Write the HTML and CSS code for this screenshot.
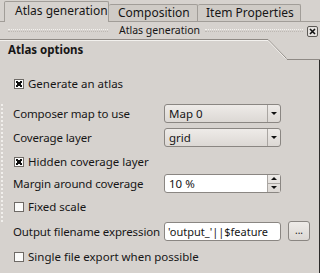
FILE: index.html
```html
<!DOCTYPE html>
<html lang="en">
<head>
    <meta charset="UTF-8">
    <title>Atlas generation</title>
    <link rel="stylesheet" href="styles.css">
</head>
<body>
    <div class="tabbar">
        <div class="tab active">Atlas generation</div>
        <div class="tab">Composition</div>
        <div class="tab">Item Properties</div>
    </div>

    <div class="dock-title">
        <span class="grip grip-left"></span>
        <span class="dock-name">Atlas generation</span>
        <span class="grip grip-right"></span>
        <span class="dock-close">
            <svg width="11" height="11" viewBox="0 0 11 11">
                <rect x="0.5" y="0.5" width="10" height="10" rx="1.5" fill="#e4e1de" stroke="#5c5955"/>
                <path d="M3 3 L8 8 M8 3 L3 8" stroke="#111" stroke-width="1.6"/>
            </svg>
        </span>
    </div>

    <div class="group-head">
        <div class="group-title">Atlas options</div>
        <svg class="group-slant" width="19" height="21" viewBox="0 0 19 21">
            <path d="M0 0.5 L18.5 19.5" stroke="#8f8a85" stroke-width="1" fill="none"/>
            <path d="M0 1.5 L17.5 19.5" stroke="#f3f1ee" stroke-width="1" fill="none"/>
        </svg>
        <div class="group-tail"></div>
    </div>

    <div class="group-body">
        <label class="check-row first">
            <span class="box checked"></span>Generate an atlas
        </label>

        <div class="form-rows">
            <div class="form-grid">
                <div class="row r1">
                    <span class="label">Composer map to use</span>
                    <span class="combo">Map 0<span class="combo-arrow"></span></span>
                </div>
                <div class="row r2">
                    <span class="label">Coverage layer</span>
                    <span class="combo">grid<span class="combo-arrow"></span></span>
                </div>
                <div class="row r3">
                    <label class="check"><span class="box checked"></span>Hidden coverage layer</label>
                </div>
                <div class="row r4">
                    <span class="label">Margin around coverage</span>
                    <span class="spin">10 %<span class="spin-arrows"><i class="up"></i><i class="down"></i></span></span>
                </div>
                <div class="row r5">
                    <label class="check"><span class="box"></span>Fixed scale</label>
                </div>
            </div>
            <div class="row r6">
                <span class="label">Output filename expression</span>
                <span class="field">'output_'||$feature</span>
                <span class="dots-btn">...</span>
            </div>
            <div class="row r7">
                <label class="check"><span class="box"></span>Single file export when possible</label>
            </div>
        </div>
    </div>
</body>
</html>
```

FILE: styles.css
```css
body {
    margin: 0;
    width: 320px;
    height: 273px;
    overflow: hidden;
    background: #d6d2ce;
    font-family: "Noto Sans", sans-serif;
    font-size: 11.5px;
    color: #161616;
    white-space: nowrap;
}

/* tabs */
.tabbar {
    display: flex;
    align-items: flex-end;
    height: 22px;
    padding-left: 4px;
    box-sizing: border-box;
    border-bottom: 1px solid #a19d98;
}

.tab {
    height: 17px;
    padding: 0 8px;
    box-sizing: border-box;
    border: 1px solid #a19d98;
    border-bottom: none;
    border-left: none;
    background: #cfcbc6;
    font-size: 12px;
    line-height: 16px;
    border-radius: 2px 2px 0 0;
}

.tab:nth-child(2) {
    width: 89px;
    padding-left: 9px;
}

.tab:nth-child(3) {
    width: 103px;
}

.tab.active {
    width: 105px;
    height: 21px;
    margin-bottom: -1px;
    padding-left: 10px;
    border-left: 1px solid #a19d98;
    background: #d6d2ce;
    line-height: 18px;
}

/* dock title */
.dock-title {
    display: flex;
    align-items: center;
    height: 16px;
    font-size: 10.5px;
}

.grip {
    height: 1px;
    border-top: 1px dotted #f4f2ef;
    border-bottom: 1px dotted #bdb8b3;
}

.grip-left {
    margin-left: 8px;
    width: 100px;
}

.dock-name {
    margin-left: 11px;
    width: 86px;
}

.grip-right {
    width: 98px;
}

.dock-close {
    display: flex;
    margin-left: 4px;
    margin-top: 3px;
}

/* group header */
.group-head {
    display: flex;
    height: 21px;
    margin-top: 1px;
}

.group-title {
    width: 268px;
    padding-left: 8px;
    box-sizing: border-box;
    border-top: 1px solid #8f8a85;
    box-shadow: inset 0 1px 0 #f3f1ee;
    font-weight: bold;
    font-size: 11.5px;
    line-height: 16px;
    padding-top: 2px;
}

.group-tail {
    flex: 1;
    border-bottom: 1px solid #8f8a85;
}

/* group body */
.group-body {
    height: 214px;
    border-right: 1px solid #2c2b2a;
    padding-top: 14px;
    box-sizing: border-box;
}

.check-row,
.check {
    display: flex;
    align-items: center;
    height: 19px;
    padding-left: 14px;
}

.box {
    width: 8px;
    height: 8px;
    margin-right: 4px;
    border: 1px solid #6e6a66;
    background: #fbfbfa;
    position: relative;
}

.box.checked::after {
    content: "";
    position: absolute;
    left: 1px;
    top: 1px;
    width: 6px;
    height: 6px;
    background:
        linear-gradient(45deg, transparent 36%, #111 36%, #111 64%, transparent 64%),
        linear-gradient(-45deg, transparent 36%, #111 36%, #111 64%, transparent 64%);
}

.form-rows {
    margin-top: 11px;
}

.form-grid {
    border-left: 2px dotted #f1efec;
    margin-left: 1px;
    margin-right: -3px;
}

.form-grid .row {
    margin-left: -3px;
}

.row {
    display: flex;
    align-items: flex-start;
}

.row .label {
    width: 151px;
    padding-left: 13px;
    line-height: 19px;
    letter-spacing: -0.12px;
}

.r1, .r2 { height: 24px; }
.r3 { height: 22px; }
.r4 { height: 23px; }
.r5, .r6 { height: 25px; }
.r7 { height: 19px; }

.combo,
.spin,
.field {
    position: relative;
    width: 117px;
    height: 19px;
    box-sizing: border-box;
    padding-left: 4px;
    border: 1px solid #8a8682;
    border-radius: 3px;
    line-height: 17px;
}

.combo {
    background: linear-gradient(#eeebe8, #dcd8d4);
}

.combo-arrow {
    position: absolute;
    right: 0;
    top: 0;
    width: 12px;
    height: 17px;
    border-left: 1px solid #aaa6a2;
}

.combo-arrow::after {
    content: "";
    position: absolute;
    left: 3px;
    top: 7px;
    border-left: 3px solid transparent;
    border-right: 3px solid transparent;
    border-top: 3px solid #111;
}

.spin,
.field {
    background: #ffffff;
}

.spin-arrows {
    position: absolute;
    right: 0;
    top: 0;
    width: 12px;
    height: 17px;
    border-left: 1px solid #aaa6a2;
    background: linear-gradient(#eeebe8, #dcd8d4);
    display: flex;
    flex-direction: column;
}

.spin-arrows i {
    flex: 1;
    position: relative;
}

.spin-arrows .up {
    border-bottom: 1px solid #aaa6a2;
}

.spin-arrows .up::after,
.spin-arrows .down::after {
    content: "";
    position: absolute;
    left: 3px;
    top: 2px;
    border-left: 3px solid transparent;
    border-right: 3px solid transparent;
}

.spin-arrows .up::after {
    border-bottom: 3px solid #111;
}

.spin-arrows .down::after {
    top: 2px;
    border-top: 3px solid #111;
}

.field {
    padding-left: 3px;
    font-size: 11px;
}

.dots-btn {
    width: 22px;
    height: 20px;
    margin-left: 7px;
    margin-top: -1px;
    box-sizing: border-box;
    border: 1px solid #8a8682;
    border-radius: 3px;
    background: linear-gradient(#eeebe8, #dcd8d4);
    text-align: center;
    font-size: 10px;
    line-height: 16px;
}
```
